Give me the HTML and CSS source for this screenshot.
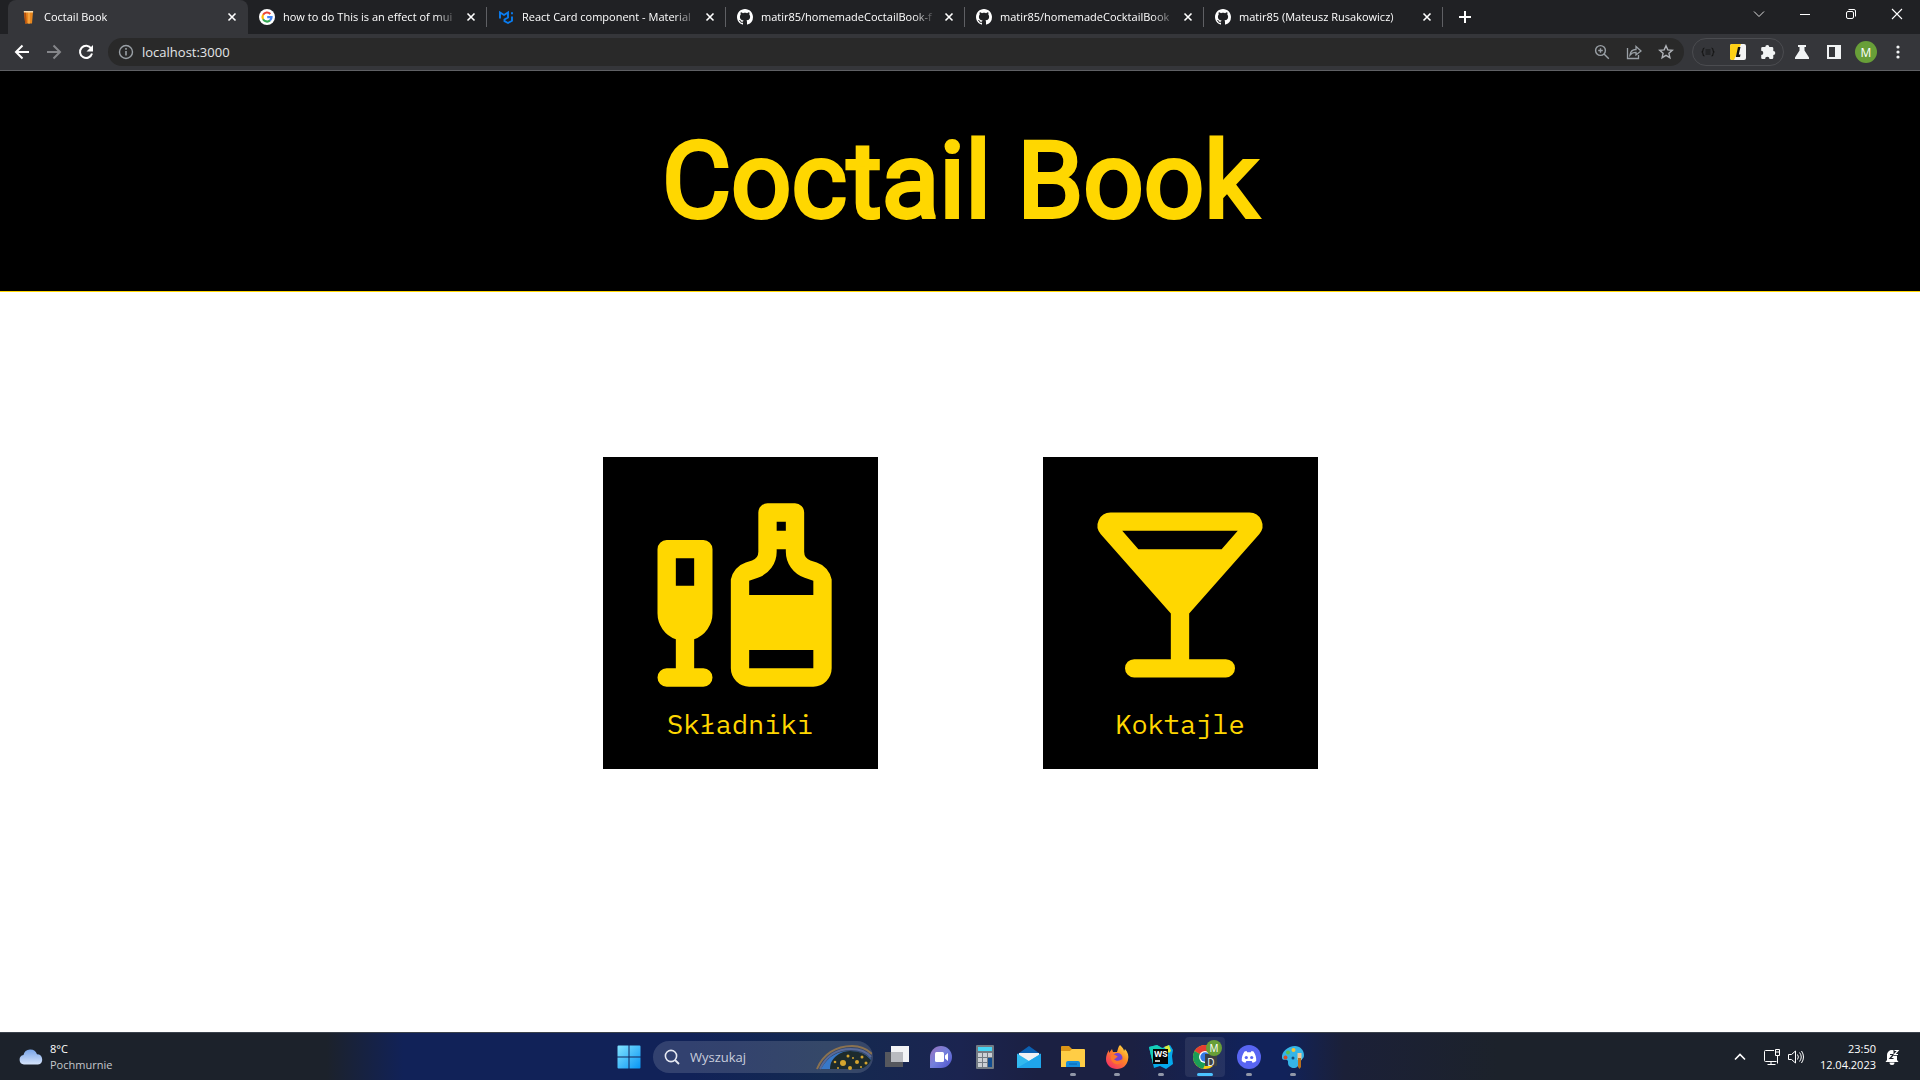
FILE: index.html
```html
<!DOCTYPE html>
<html lang="pl">
<head>
<meta charset="utf-8">
<meta name="viewport" content="width=device-width, initial-scale=1">
<title>Coctail Book</title>
<link rel="stylesheet" href="styles.css">
</head>
<body>
<svg class="defs" aria-hidden="true">
  <symbol id="close" viewBox="0 0 10 10"><path d="M1.500 1.500l7 7M8.500 1.500l-7 7" fill="none" stroke="currentColor" stroke-width="1.600"/></symbol>
  <symbol id="github" viewBox="0 0 16 16"><path fill="#fff" d="M8 0C3.580 0 0 3.580 0 8c0 3.540 2.290 6.530 5.470 7.590.4.070.55-.17.55-.38 0-.19-.01-.82-.01-1.490-2.010.37-2.530-.49-2.690-.94-.09-.23-.48-.94-.82-1.130-.28-.15-.68-.52-.01-.53.63-.01 1.080.58 1.230.82.72 1.210 1.870.87 2.330.66.070-.52.280-.87.510-1.070-1.780-.2-3.640-.89-3.640-3.950 0-.87.310-1.590.820-2.150-.08-.2-.36-1.020.080-2.120 0 0 .67-.21 2.200.82.640-.18 1.320-.27 2-.27s1.360.090 2 .270c1.530-1.040 2.200-.82 2.200-.82.440 1.100.160 1.920.080 2.120.510.560.820 1.270.820 2.150 0 3.070-1.870 3.750-3.650 3.950.290.250.540.730.540 1.480 0 1.070-.01 1.930-.01 2.200 0 .210.150.460.550.380A8.010 8.010 0 0 0 16 8c0-4.420-3.580-8-8-8z"/></symbol>
</svg>

<header class="browser">
  <div class="tabstrip">
    <div class="tab tab-active">
      <svg class="favicon" viewBox="0 0 16 16"><path d="M4 3h9l-1 11.500H5.200z" fill="#e8871e"/><path d="M4 3h2l.8 11.500H5.200z" fill="#b9520e"/><path d="M8 3h2v11.500H8z" fill="#f6a23c"/><path d="M3.800 2h9.300v1.500H3.800z" fill="#f7dcae"/></svg>
      <span class="tab-title">Coctail Book</span>
      <button class="tab-close" aria-label="Zamknij kartę"><svg viewBox="0 0 10 10"><use href="#close"/></svg></button>
    </div>
    <div class="tab">
      <svg class="favicon" viewBox="0 0 16 16"><circle cx="8" cy="8" r="8" fill="#fff"/><g fill="none" stroke-width="2.200"><path d="M4.100 5.800A4.500 4.500 0 0 1 11.300 4.900" stroke="#ea4335"/><path d="M4.100 10.200a4.500 4.500 0 0 1 0-4.400" stroke="#fbbc05"/><path d="M11 11.400a4.500 4.500 0 0 1-6.900-1.200" stroke="#34a853"/><path d="M8.200 8.200h4.300a4.500 4.500 0 0 1-1.500 3.200" stroke="#4285f4"/></g></svg>
      <span class="tab-title">how to do This is an effect of mui</span>
      <button class="tab-close" aria-label="Zamknij kartę"><svg viewBox="0 0 10 10"><use href="#close"/></svg></button>
    </div>
    <div class="tab">
      <svg class="favicon" viewBox="0 0 16 16"><path d="M2 9.500V3.500l4 2.500 4-2.500v5L6.500 10.500v1.700L10 14l4-2.200V7.500M14 3.200v2" fill="none" stroke="#0a7cf0" stroke-width="1.900"/></svg>
      <span class="tab-title">React Card component - Material</span>
      <button class="tab-close" aria-label="Zamknij kartę"><svg viewBox="0 0 10 10"><use href="#close"/></svg></button>
    </div>
    <div class="tab">
      <svg class="favicon" viewBox="0 0 16 16"><use href="#github"/></svg>
      <span class="tab-title">matir85/homemadeCoctailBook-f</span>
      <button class="tab-close" aria-label="Zamknij kartę"><svg viewBox="0 0 10 10"><use href="#close"/></svg></button>
    </div>
    <div class="tab">
      <svg class="favicon" viewBox="0 0 16 16"><use href="#github"/></svg>
      <span class="tab-title">matir85/homemadeCocktailBook</span>
      <button class="tab-close" aria-label="Zamknij kartę"><svg viewBox="0 0 10 10"><use href="#close"/></svg></button>
    </div>
    <div class="tab">
      <svg class="favicon" viewBox="0 0 16 16"><use href="#github"/></svg>
      <span class="tab-title">matir85 (Mateusz Rusakowicz)</span>
      <button class="tab-close" aria-label="Zamknij kartę"><svg viewBox="0 0 10 10"><use href="#close"/></svg></button>
    </div>
    <button class="new-tab" aria-label="Nowa karta"><svg viewBox="0 0 12 12"><path d="M6 0v12M0 6h12" stroke="#fff" stroke-width="2"/></svg></button>
    <div class="window-controls">
      <button aria-label="Szukaj kart"><svg viewBox="0 0 12 12"><path d="M1 3.500l5 5 5-5" fill="none" stroke="#ddd"/></svg></button>
      <button aria-label="Minimalizuj"><svg viewBox="0 0 12 12"><path d="M1 6.500h10" stroke="#fff"/></svg></button>
      <button aria-label="Przywróć"><svg viewBox="0 0 12 12"><rect x="1.500" y="3.500" width="7" height="7" rx="1.500" fill="none" stroke="#fff"/><path d="M3.500 1.500H9A1.500 1.500 0 0 1 10.500 3v5.500" fill="none" stroke="#fff"/></svg></button>
      <button aria-label="Zamknij"><svg viewBox="0 0 12 12"><path d="M1 1l10 10M11 1L1 11" stroke="#fff" stroke-width="1.100"/></svg></button>
    </div>
  </div>

  <div class="toolbar">
    <button class="tool" aria-label="Wstecz"><svg viewBox="0 0 16 16"><path d="M15 8H2M8.500 1.500L2 8l6.500 6.500" fill="none" stroke="#fff" stroke-width="2"/></svg></button>
    <button class="tool" aria-label="Dalej"><svg viewBox="0 0 16 16"><path d="M1 8h13M7.500 1.500L14 8l-6.500 6.500" fill="none" stroke="#85868a" stroke-width="2"/></svg></button>
    <button class="tool" aria-label="Odśwież"><svg viewBox="0 0 16 16"><path d="M13.200 4.500A6.100 6.100 0 1 0 14 9.500" fill="none" stroke="#fff" stroke-width="2"/><path d="M15 1v6.500H8.500z" fill="#fff"/></svg></button>
    <div class="omnibox">
      <svg class="info" viewBox="0 0 16 16"><circle cx="8" cy="8" r="6.500" fill="none" stroke="#9aa0a6" stroke-width="1.400"/><path d="M8 7v4.500M8 4v1.700" stroke="#9aa0a6" stroke-width="1.600"/></svg>
      <input class="address" type="text" value="localhost:3000" aria-label="Adres">
      <button class="tool" aria-label="Powiększenie"><svg viewBox="0 0 16 16"><circle cx="6.500" cy="6.500" r="4.900" fill="none" stroke="#9aa0a6" stroke-width="1.400"/><path d="M10 10l4.800 4.800M4.200 6.500h4.600M6.500 4.200v4.600" stroke="#9aa0a6" stroke-width="1.400"/></svg></button>
      <button class="tool" aria-label="Udostępnij"><svg viewBox="0 0 16 16"><path d="M1.500 4v10.500h11V11M4 11c.5-4 2.500-5.500 6-5.500v-3L15 7l-5 4V8.300C7.500 8.300 5.500 9 4 11z" fill="none" stroke="#9aa0a6" stroke-width="1.300"/></svg></button>
      <button class="tool" aria-label="Dodaj do zakładek"><svg viewBox="0 0 16 16"><path d="M8 1.800l1.800 4.100 4.500.4-3.400 3 1 4.400L8 11.400l-3.900 2.300 1-4.400-3.400-3 4.500-.4z" fill="none" stroke="#b0b3b8" stroke-width="1.400"/></svg></button>
    </div>
    <div class="extensions">
      <button class="tool" aria-label="Formatowanie JSON"><svg viewBox="0 0 16 16"><path d="M4.500 4Q3 4 3 6T1.500 8Q3 8 3 10T4.500 12M11.500 4Q13 4 13 6T14.500 8Q13 8 13 10T11.500 12M5.500 6h5M5.500 8h5M5.500 10h5" fill="none" stroke="#151515" stroke-width="1.200"/></svg></button>
      <button class="tool" aria-label="Rozszerzenie L"><svg viewBox="0 0 16 16"><rect width="16" height="16" rx="2" fill="#f4f4f4"/><path d="M2 0h9L4 16H2a2 2 0 0 1-2-2V2a2 2 0 0 1 2-2z" fill="#fdd017"/><path d="M8 3h2.500L8.800 10.500H10.500L10 13H5.800z" fill="#111"/></svg></button>
      <button class="tool" aria-label="Rozszerzenia"><svg viewBox="0 0 16 16"><path d="M5.300 3a2 2 0 0 1 4 0H12a1.300 1.300 0 0 1 1.300 1.300V7a2 2 0 0 1 0 4v2.700A1.300 1.300 0 0 1 12 15H9.500a2.200 2.200 0 0 0-4.400 0H2.500a1.300 1.300 0 0 1-1.300-1.300V11a2.100 2.100 0 0 0 0-4.200V4.300A1.300 1.300 0 0 1 2.500 3z" fill="#f1f3f4"/></svg></button>
    </div>
    <button class="tool" aria-label="Eksperymenty"><svg viewBox="0 0 16 16"><path d="M4 1h8v2h-1.500v3.500L15 13.500V15H1v-1.500l4.500-7V3H4z" fill="#f1f3f4"/></svg></button>
    <button class="tool" aria-label="Panel boczny"><svg viewBox="0 0 16 16"><path d="M1 1h14v14H1zM3 3v10h6V3z" fill="#f1f3f4" fill-rule="evenodd"/></svg></button>
    <button class="tool profile" aria-label="Profil">M</button>
    <button class="tool" aria-label="Menu"><svg viewBox="0 0 16 16" fill="#f1f3f4"><circle cx="8" cy="3" r="1.600"/><circle cx="8" cy="8" r="1.600"/><circle cx="8" cy="13" r="1.600"/></svg></button>
  </div>
</header>

<div class="site">
  <header class="banner"><h1>Coctail Book</h1></header>
  <main class="cards">
    <a class="card" href="#skladniki">
      <svg class="card-icon" viewBox="0 0 24 24"><path fill="currentColor" fill-rule="evenodd" d="M4 6h4a1 1 0 0 1 1 1v7a3 3 0 0 1-2 2.830V20h1a1 1 0 0 1 0 2H4a1 1 0 0 1 0-2h1v-3.170A3 3 0 0 1 3 14V7a1 1 0 0 1 1-1zM5 8v3h2V8zM15 2h3a1 1 0 0 1 1 1v4.280a1 1 0 0 0 .684.948l.688.229A2.400 2.400 0 0 1 22 10.320V20a2 2 0 0 1-2 2h-7a2 2 0 0 1-2-2v-9.680a2.400 2.400 0 0 1 1.628-1.863l.688-.229A1 1 0 0 0 14 7.280V3a1 1 0 0 1 1-1zM16 4v1h1V4zM16 7v.28a3 3 0 0 1-2.052 2.846L13 10.442V12h7v-1.558l-.948-.316A3 3 0 0 1 17 7.280V7zM13 18v2h7v-2z"/></svg>
      <span class="card-label">Składniki</span>
    </a>
    <a class="card" href="#koktajle">
      <svg class="card-icon" viewBox="0 0 24 24"><path fill="currentColor" fill-rule="evenodd" d="M4.420 3h15.160a1.420 1.420 0 0 1 1.060 2.360L13 14.020V19h4a1 1 0 0 1 0 2H7a1 1 0 0 1 0-2h4v-4.980L3.360 5.360A1.420 1.420 0 0 1 4.420 3zM5.700 5l1.760 2h9.080l1.760-2z"/></svg>
      <span class="card-label">Koktajle</span>
    </a>
  </main>
</div>

<footer class="taskbar">
  <div class="weather">
    <svg class="weather-icon" viewBox="0 0 24 16"><defs><linearGradient id="cl" x2="0" y2="1"><stop stop-color="#78a4e8"/><stop offset="1" stop-color="#d6e4fb"/></linearGradient></defs><path d="M5 15.500a4.800 4.800 0 0 1-.5-9.500 7 7 0 0 1 13.500-.8 5.200 5.200 0 0 1 1 10.300z" fill="url(#cl)"/></svg>
    <div class="weather-text"><span class="temp">8°C</span><span>Pochmurnie</span></div>
  </div>
  <div class="apps">
    <button class="app" aria-label="Start"><svg viewBox="0 0 24 24"><defs><linearGradient id="wn" x2="1" y2="1"><stop stop-color="#83e4ff"/><stop offset="1" stop-color="#0795f5"/></linearGradient></defs><path d="M1.500.5h10v11h-11v-10a1 1 0 0 1 1-1zM12.500.5h10a1 1 0 0 1 1 1v10h-11zM.5 12.500h11v11h-10a1 1 0 0 1-1-1zM12.500 12.500h11v10a1 1 0 0 1-1 1h-10z" fill="url(#wn)"/></svg></button>
    <div class="search">
      <svg class="search-icon" viewBox="0 0 16 16"><circle cx="7" cy="7" r="5.600" fill="none" stroke="#e6e9f2" stroke-width="1.600"/><path d="M11 11l4 4" stroke="#e6e9f2" stroke-width="1.800"/></svg>
      <input class="search-input" type="search" placeholder="Wyszukaj" aria-label="Wyszukaj">
      <svg class="search-art" viewBox="0 0 56 26"><path d="M1 25C7 10 20 2 36 2c8 0 15 3 20 8" fill="none" stroke="#8b7250" stroke-width="2"/><path d="M4 25C11 10 22 5 35 5c8 0 15 2 20 8" fill="none" stroke="#596a99" stroke-width="2"/><path d="M5 25C12 12 22 7 34 7c9 0 16 3 21 8-1 5-5 8-10 10z" fill="#3878c8"/><path d="M14 25c0-7 3-11 9-15 3-2 7-3 11-3 9 0 16 3 21 9-2 5-6 8-11 9z" fill="#1d2b2d"/><g fill="#d5a52f"><circle cx="27" cy="19" r="3"/><circle cx="41" cy="18" r="2"/><circle cx="34" cy="24" r="2"/><circle cx="32" cy="12" r="1.500"/><circle cx="46" cy="13" r="1.500"/><circle cx="19" cy="18" r="1.300"/><circle cx="50" cy="19" r="1.500"/><circle cx="22" cy="24" r="1"/><circle cx="37" cy="14" r="1"/><circle cx="45" cy="23" r="1"/></g></svg>
    </div>
    <button class="app" aria-label="Widok zadań"><svg viewBox="0 0 24 24"><path d="M6 1h18v16H6z" fill="#f2f3f5"/><path d="M0 7h18v15H0z" fill="#56585e"/><path d="M6 7h12v10H6z" fill="#b9bbc0"/></svg></button>
    <button class="app" aria-label="Czat"><svg viewBox="0 0 24 24"><defs><linearGradient id="ch" x2="1" y2="1"><stop stop-color="#9a72bd"/><stop offset=".5" stop-color="#7480dc"/><stop offset="1" stop-color="#4d50ca"/></linearGradient></defs><path d="M12 1a11 11 0 1 1 0 22H1V12A11 11 0 0 1 12 1z" fill="url(#ch)"/><rect x="6" y="7" width="9" height="10" rx="1.500" fill="#fff"/><path d="M16 10.500L19 8v8l-3-2.500z" fill="#fff"/></svg></button>
    <button class="app" aria-label="Kalkulator"><svg viewBox="0 0 24 24"><rect x="3" width="18" height="24" rx="1" fill="#737b84"/><path d="M5 2h14v4H5z" fill="#47d5f5"/><path d="M5 8h4v4H5zM10 8h4v4h-4zM15 8h4v4h-4zM5 13h4v4H5zM10 13h4v4h-4zM5 18h4v4H5zM10 18h4v4h-4z" fill="#ccd0d5"/><path d="M15 13h4v9h-4z" fill="#124d91"/></svg></button>
    <button class="app" aria-label="Poczta"><svg viewBox="0 0 24 24"><path d="M0 9.500L12 1l12 8.500V12H0z" fill="#0b61b3"/><path d="M2 8h20v8H2z" fill="#f1f2f4"/><path d="M0 8.500L12 16l12-7.500V23H0z" fill="#32b9ef"/><path d="M0 23l24-14v14z" fill="#1fa5ea"/><path d="M2 8h20l-10 7z" fill="#f1f2f4"/></svg></button>
    <button class="app running" aria-label="Eksplorator plików"><svg viewBox="0 0 24 24"><path d="M0 2a1 1 0 0 1 1-1h7l3 3v5H0z" fill="#dc9516"/><path d="M0 6h9l2-2h12a1 1 0 0 1 1 1v17H0z" fill="#ffcd45"/><path d="M5 22v-4a2 2 0 0 1 2-2h10a2 2 0 0 1 2 2v4z" fill="#168ddd"/><path d="M8 19h8" stroke="#0b63ae"/></svg></button>
    <button class="app running" aria-label="Firefox"><svg viewBox="0 0 24 24"><defs><linearGradient id="ff" x1="1" x2=".2" y2="1"><stop stop-color="#fff14f"/><stop offset=".45" stop-color="#ff8b23"/><stop offset="1" stop-color="#f52e67"/></linearGradient></defs><path d="M15 0c2 2 4 4 4 6l1-2c3 3 4 7 3 11-1 5-5 9-11 9S1 20 1 14c0-3 1-6 3-9v3c1-1 2-3 3-4l1 3h4c1-3 1-5 3-7z" fill="url(#ff)"/><circle cx="12.500" cy="13" r="5" fill="#7842cf"/><path d="M6 10c3-1 5 0 7 2-2 0-2 2-4 2 2 3 7 2 9-1-1 5-4 7-7 6-4-1-6-5-5-9z" fill="#ff772b"/></svg></button>
    <button class="app running" aria-label="WebStorm"><svg viewBox="0 0 24 24"><path d="M0 2l8-2 5 3 8-3 3 5-1 6 1 8-7 5-6-3-6 2z" fill="#05a9ec"/><path d="M0 2l8-2 5 3 5 1-14 15z" fill="#16ceb4"/><path d="M15 2l5-2 2 6-2 2z" fill="#d9ee3b"/><path d="M4 4h15v15H4z" fill="#050505"/><path d="M6 16h5" stroke="#fff" stroke-width="1.500"/><text x="5" y="12" font-size="8" font-weight="700" fill="#fff" font-family="Inter, sans-serif">WS</text></svg></button>
    <button class="app app-active running" aria-label="Chrome">
      <svg viewBox="0 0 24 24"><circle cx="12" cy="12" r="12" fill="#f9c916"/><path d="M12 12L1.600 6A12 12 0 0 1 22.400 6z" fill="#e63e31"/><path d="M12 12L1.600 6A12 12 0 0 0 10 23.800L14 16z" fill="#1b9d57"/><circle cx="12" cy="12" r="6" fill="#fff"/><circle cx="12" cy="12" r="4.700" fill="#3578e5"/></svg>
      <span class="badge-d">D</span><span class="badge-m">M</span>
    </button>
    <button class="app running" aria-label="Discord"><svg viewBox="0 0 24 24"><circle cx="12" cy="12" r="12" fill="#5865f2"/><path d="M7.500 6.500l2-.5.7 1.200h3.600L14.500 6l2 .5c2 2.800 3 6 2.700 9.500-1.200 1-2.400 1.500-3.700 1.800L14.700 16H9.300l-.8 1.800C7.200 17.500 6 17 4.800 16c-.3-3.500.7-6.700 2.700-9.500z" fill="#fff"/><circle cx="9.300" cy="12.500" r="1.600" fill="#5865f2"/><circle cx="14.700" cy="12.500" r="1.600" fill="#5865f2"/></svg></button>
    <button class="app running" aria-label="Paint"><svg viewBox="0 0 24 24"><path d="M14 1c5 0 9 4 9 9 0 4-2 3-3 6s-2 4-4 6c-2 2-6 1-8-1-2-3 0-5-2-6s-4 1-5-2C0 7 7 1 14 1z" fill="#35b5e7"/><circle cx="4.500" cy="12.500" r="2" fill="#d84c28"/><circle cx="7" cy="7.500" r="2" fill="#61c04d"/><circle cx="12.500" cy="5" r="2" fill="#f6c535"/><circle cx="12" cy="13" r="1.500" fill="#164a7a"/><path d="M16.500 8h4v7h-4z" fill="#f2c899"/><path d="M17 13h3v9l-1.500 2-1.500-2z" fill="#b8701e"/></svg></button>
  </div>
  <div class="tray">
    <button class="tray-button" aria-label="Pokaż ukryte ikony"><svg viewBox="0 0 16 16"><path d="M3 10.500l5-5 5 5" fill="none" stroke="#fff" stroke-width="1.600"/></svg></button>
    <button class="tray-status" aria-label="Sieć i dźwięk">
      <svg viewBox="0 0 16 16"><path d="M10 1.500H1.500A1 1 0 0 0 .5 2.500v9a1 1 0 0 0 1 1h11M7 12.500V15M3.500 15.500h8M11.500.5h4v6h-4zM11.500 3h4M13.500 6.500v8" fill="none" stroke="#fff"/></svg>
      <svg viewBox="0 0 16 16"><path d="M.5 5.500h3l4-3.500v12l-4-3.500h-3zM9.500 5.500q1.800 2.500 0 5M11.500 3.500q3.500 4.500 0 9M13.500 2q4 6 0 12" fill="none" stroke="#fff"/></svg>
    </button>
    <div class="clock"><time>23:50</time><span>12.04.2023</span></div>
    <button class="tray-bell" aria-label="Powiadomienia"><svg viewBox="0 0 16 16"><path d="M3 6a5 5 0 0 1 10 0v5l1.500 2h-13L3 11zM5.500 13.500h5a2.500 2.500 0 0 1-5 0z" fill="#fff"/><path d="M6 5.500h3.500L6 9.500h3.500" fill="none" stroke="#1c222b" stroke-width="1.200"/><path d="M9.500.8h5v6h-5z" fill="#1c222b"/><path d="M10.500 1.500h3.500l-3.500 4H14" fill="none" stroke="#fff" stroke-width="1.200"/></svg></button>
  </div>
</footer>
</body>
</html>
```
FILE: styles.css
```css
* { box-sizing: border-box; }

body {
  margin: 0;
  min-height: 100vh;
  display: flex;
  flex-direction: column;
  background: #fff;
  font-family: "Open Sans", "Noto Sans", sans-serif;
}

button {
  padding: 0;
  border: 0;
  background: none;
  color: inherit;
  font: inherit;
}

input {
  padding: 0;
  border: 0;
  outline: 0;
  background: none;
  font: inherit;
  min-width: 0;
}

svg { display: block; flex: none; }
.defs { position: absolute; width: 0; height: 0; }

/* Browser window */
.browser {
  color: #fff;
  background: #35363a;
  border-bottom: 1px solid #5f6064;
}

.tabstrip {
  display: flex;
  height: 34px;
  padding-left: 8px;
  background: #202124;
}

.tab {
  display: flex;
  align-items: center;
  flex: 0 1 239px;
  min-width: 0;
  padding: 0 8px 0 11px;
  font-size: 11px;
  background: linear-gradient(#5f6064, #5f6064) right 7px / 1px 20px no-repeat;
}

.tab-active {
  flex-basis: 240px;
  padding-left: 12px;
  background: #35363a;
  border-radius: 8px 8px 0 0;
}

.favicon { width: 16px; height: 16px; }

.tab-title {
  flex: 1;
  margin: 0 4px 0 8px;
  overflow: hidden;
  white-space: nowrap;
  line-height: 18px;
  mask-image: linear-gradient(90deg, #000 calc(100% - 24px), transparent);
}

.tab-close {
  display: grid;
  place-items: center;
  width: 16px;
  height: 16px;
}
.tab-close svg { width: 10px; height: 10px; }

.new-tab { padding: 0 16px; }
.new-tab svg { width: 12px; height: 12px; }

.window-controls { display: flex; margin-left: auto; }
.window-controls button {
  display: grid;
  place-items: center;
  width: 46px;
  height: 28px;
}
.window-controls svg { width: 12px; height: 12px; }

.toolbar {
  display: flex;
  align-items: center;
  height: 36px;
  padding: 0 6px;
}

.tool {
  display: grid;
  place-items: center;
  flex: none;
  width: 32px;
  height: 28px;
}
.tool svg { width: 16px; height: 16px; }

.omnibox {
  display: flex;
  align-items: center;
  flex: 1;
  height: 28px;
  margin: 0 8px 0 6px;
  padding: 0 2px 0 10px;
  border-radius: 14px;
  background: #292929;
}
.info { width: 16px; height: 16px; }
.address {
  flex: 1;
  margin-left: 8px;
  color: #e3e5e8;
  font-size: 13px;
}

.extensions {
  display: flex;
  align-items: center;
  height: 28px;
  margin-right: 2px;
  border: 1px solid #4b4c50;
  border-radius: 14px;
}
.extensions .tool { width: 30px; }

.profile {
  width: 22px;
  height: 22px;
  margin: 0 5px;
  border-radius: 50%;
  background: #689f38;
  font-size: 12px;
}

/* Site */
.site {
  flex: 1;
  display: flex;
  flex-direction: column;
}

.banner {
  padding: 44px 0;
  border-bottom: 1px solid #ffd700;
  background: #000;
  color: #ffd700;
  text-align: center;
}
.banner h1 {
  margin: 0;
  font: 400 106px/132px Roboto, sans-serif;
  -webkit-text-stroke: 4px #ffd700;
}

.cards {
  display: flex;
  justify-content: center;
  gap: 165px;
  padding: 165px 24px;
}

.card {
  display: flex;
  flex-direction: column;
  align-items: center;
  width: 275px;
  padding: 28px 0 26px;
  background: #000;
  color: #ffd700;
  text-decoration: none;
}
.card-icon { width: 220px; height: 220px; }
.card-label {
  font: 27px/38px "IBM Plex Mono", "Liberation Mono", monospace;
}

/* Taskbar */
.taskbar {
  display: grid;
  grid-template-columns: 1fr auto 1fr;
  height: 48px;
  border-top: 1px solid #3b424c;
  color: #fff;
  background: linear-gradient(90deg, #1c222b 0 17%, #112258 21% 36%, #142a50 43%, #1b2450 50%, #1b2042 54% 59%, #11225a 65% 67%, #1b2038 70%, #1c222b 78%);
  font-size: 11px;
  line-height: 16px;
}

.weather {
  display: flex;
  align-items: center;
  gap: 7px;
  padding-left: 19px;
}
.weather-icon { width: 24px; height: 16px; }
.weather-text { display: flex; flex-direction: column; color: #c5c8cc; }
.temp { color: #fff; }

.apps { display: flex; align-items: center; padding-left: 2px; }

.app {
  position: relative;
  display: grid;
  place-items: center;
  width: 40px;
  height: 40px;
  margin: 0 2px;
  border-radius: 4px;
}
.app svg { width: 24px; height: 24px; }
.app-active { background: #ffffff14; }
.running::after {
  content: "";
  position: absolute;
  left: 17px;
  bottom: 1px;
  width: 6px;
  height: 3px;
  border-radius: 2px;
  background: #9197a8;
}
.app-active::after {
  left: 12px;
  width: 16px;
  background: #4cc2ff;
}

.badge-m,
.badge-d {
  position: absolute;
  display: grid;
  place-items: center;
  font-size: 10px;
}
.badge-m {
  top: 3px;
  right: 3px;
  width: 16px;
  height: 16px;
  border-radius: 50%;
  background: #689f38;
}
.badge-d {
  right: 8px;
  bottom: 11px;
  width: 12px;
  height: 12px;
  background: #3c4043;
}

.search {
  display: flex;
  align-items: center;
  width: 220px;
  height: 32px;
  margin: 0 2px;
  padding-left: 11px;
  overflow: hidden;
  border-radius: 16px;
  background: #ffffff24;
}
.search-icon { width: 16px; height: 16px; }
.search-input {
  flex: 1;
  margin-left: 10px;
  color: #fff;
  font-size: 13px;
}
.search-input::placeholder { color: #c9cedd; opacity: 1; }
.search-art { width: 56px; height: 26px; margin-right: 1px; }

.tray {
  display: flex;
  align-items: center;
  justify-content: flex-end;
  padding-right: 20px;
}
.tray-button svg, .tray-status svg, .tray-bell svg { width: 16px; height: 16px; }
.tray-status { display: flex; gap: 8px; margin: 0 16px; }
.clock {
  display: flex;
  flex-direction: column;
  align-items: flex-end;
  margin-right: 8px;
}
```
